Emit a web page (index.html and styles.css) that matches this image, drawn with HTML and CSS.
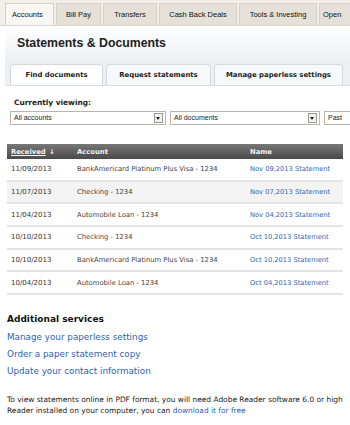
FILE: index.html
```html
<!DOCTYPE html>
<html>

<head>
    <title>Statements &amp; Documents</title>
    <link rel="stylesheet" href="styles.css">
</head>

<body>
    <div class="page">
        <div class="topnav">
            <div class="navtab active">Accounts</div>
            <div class="navtab tab-bill">Bill Pay</div>
            <div class="navtab tab-transfers">Transfers</div>
            <div class="navtab tab-deals">Cash Back Deals</div>
            <div class="navtab tab-tools">Tools &amp; Investing</div>
            <div class="navtab tab-open">Open</div>
        </div>

        <div class="heading">
            <h1>Statements &amp; Documents</h1>
        </div>

        <div class="subtabs">
            <div class="subtab active">Find documents</div>
            <div class="subtab">Request statements</div>
            <div class="subtab">Manage paperless settings</div>
        </div>

        <div class="filters">
            <div class="filter-label">Currently viewing:</div>
            <div class="selects">
                <div class="select sel-accounts">All accounts<span class="arrow"></span></div>
                <div class="select sel-docs">All documents<span class="arrow"></span></div>
                <div class="select sel-past">Past</div>
            </div>
        </div>

        <table class="docs">
            <thead>
                <tr>
                    <th class="col-date"><span class="sort">Received</span> <span class="sort-arrow">&#x2193;</span></th>
                    <th class="col-account">Account</th>
                    <th class="col-name">Name</th>
                </tr>
            </thead>
            <tbody>
                <tr>
                    <td>11/09/2013</td>
                    <td class="acct">BankAmericard Platinum Plus Visa - 1234</td>
                    <td><a href="#">Nov 09,2013 Statement</a></td>
                </tr>
                <tr class="alt">
                    <td>11/07/2013</td>
                    <td class="acct">Checking - 1234</td>
                    <td><a href="#">Nov 07,2013 Statement</a></td>
                </tr>
                <tr>
                    <td>11/04/2013</td>
                    <td class="acct">Automobile Loan - 1234</td>
                    <td><a href="#">Nov 04,2013 Statement</a></td>
                </tr>
                <tr>
                    <td>10/10/2013</td>
                    <td class="acct">Checking - 1234</td>
                    <td><a href="#">Oct 10,2013 Statement</a></td>
                </tr>
                <tr>
                    <td>10/10/2013</td>
                    <td class="acct">BankAmericard Platinum Plus Visa - 1234</td>
                    <td><a href="#">Oct 10,2013 Statement</a></td>
                </tr>
                <tr>
                    <td>10/04/2013</td>
                    <td class="acct">Automobile Loan - 1234</td>
                    <td><a href="#">Oct 04,2013 Statement</a></td>
                </tr>
            </tbody>
        </table>

        <div class="services">
            <h2>Additional services</h2>
            <a href="#">Manage your paperless settings</a>
            <a href="#">Order a paper statement copy</a>
            <a href="#">Update your contact information</a>
        </div>

        <p class="note">To view statements online in PDF format, you will need Adobe Reader software 6.0 or high<br>Reader installed on your computer, you can <a href="#">download it for free</a></p>
    </div>
</body>

</html>
```

FILE: styles.css
```css
body {
    margin: 0;
    padding: 0;
    background: #fff;
    font-family: "DejaVu Sans", Verdana, sans-serif;
    color: #222;
    overflow: hidden;
}

.page {
    width: 350px;
    height: 425px;
    overflow: hidden;
}

a {
    color: #2c5fb8;
    text-decoration: none;
}

/* top navigation */
.topnav {
    display: flex;
    gap: 2px;
    height: 22px;
    padding: 3px 0 0 5px;
    background: #f4eeeb;
    border-bottom: 1px solid #ddd8cf;
    white-space: nowrap;
}

.navtab {
    flex: none;
    display: flex;
    align-items: center;
    justify-content: center;
    background: #e5e1d9;
    border: 1px solid #d6d1c7;
    border-bottom: none;
    font-family: "Liberation Sans", Arial, sans-serif;
    font-size: 7.5px;
    color: #111;
}

.navtab.active {
    width: 49px;
    justify-content: flex-start;
    padding-left: 6px;
    box-sizing: border-box;
    background: #f8f7f4;
}

.tab-bill {
    width: 43px;
}

.tab-transfers {
    width: 52px;
}

.tab-deals {
    width: 76px;
}

.tab-tools {
    width: 76px;
}

.tab-open {
    width: 40px;
    justify-content: flex-start;
    padding-left: 3px;
}

.heading {
    margin-left: 5px;
    height: 34px;
    padding-left: 12px;
    display: flex;
    align-items: center;
    background: linear-gradient(#ffffff, #eef1f4);
}

h1 {
    margin: 0;
    font-family: "Liberation Sans", Arial, sans-serif;
    font-size: 12.3px;
    font-weight: bold;
    color: #222;
}

/* sub tabs */
.subtabs {
    display: flex;
    gap: 3px;
    height: 21px;
    margin-left: 5px;
    padding: 4px 0 0 5px;
    background: #edf0f3;
    border-bottom: 1px solid #d9dee4;
}

.subtab {
    display: flex;
    align-items: center;
    justify-content: center;
    background: #f7f8fa;
    border: 1px solid #d3d9e0;
    border-bottom: none;
    border-radius: 4px 4px 0 0;
    font-size: 6.9px;
    font-weight: bold;
    color: #222;
}

.subtab:nth-child(1) {
    width: 91px;
    background: #fff;
}

.subtab:nth-child(2) {
    width: 103px;
}

.subtab:nth-child(3) {
    width: 127px;
}

/* filters */
.filters {
    padding: 12px 0 0 10px;
}

.filter-label {
    padding-left: 4px;
    font-size: 7.4px;
    font-weight: bold;
    margin-bottom: 4px;
}

.selects {
    display: flex;
    gap: 4px;
    white-space: nowrap;
}

.select {
    position: relative;
    flex: none;
    height: 12px;
    line-height: 12px;
    padding-left: 3px;
    border: 1px solid #b9b4ad;
    background: #fff;
    font-family: "Liberation Sans", Arial, sans-serif;
    font-size: 7px;
    color: #222;
}

.sel-accounts {
    width: 151px;
}

.sel-docs {
    width: 145px;
}

.sel-past {
    width: 40px;
}

.arrow {
    position: absolute;
    right: 2px;
    top: 1px;
    width: 7px;
    height: 8px;
    border: 1px solid #9c9891;
    background: #f2f0ec;
}

.arrow::after {
    content: "";
    position: absolute;
    left: 1px;
    top: 3px;
    border-left: 2.5px solid transparent;
    border-right: 2.5px solid transparent;
    border-top: 3px solid #222;
}

/* statements table */
.docs {
    margin: 19px 0 0 7px;
    width: 336px;
    border-collapse: collapse;
    font-size: 7px;
}

.docs th {
    height: 15px;
    padding: 0 0 0 4px;
    text-align: left;
    color: #f2f2f2;
    font-size: 6.8px;
    font-weight: bold;
    background: linear-gradient(#777, #4a4a4a);
}

.docs th.col-date {
    width: 62px;
}

.docs th.col-account {
    width: 169px;
}

.sort {
    text-decoration: underline;
}

.sort-arrow {
    font-size: 7px;
    margin-left: 1px;
}

.docs td {
    height: 20.7px;
    padding: 0 0 0 4px;
    background: #fff;
    border-bottom: 2px solid #e4e4e4;
    color: #333;
    white-space: nowrap;
}

.docs tr.alt td {
    background: #f3f3f3;
}

.docs td.acct {
    font-size: 6.8px;
    color: #444;
}

.docs td a {
    font-size: 6.7px;
}

/* additional services */
.services {
    padding: 19px 0 0 7px;
    display: flex;
    flex-direction: column;
}

h2 {
    margin: 0 0 5px;
    font-size: 9px;
    font-weight: bold;
    color: #111;
}

.services a {
    font-size: 8.8px;
    line-height: 17px;
}

.note {
    margin: 14px 0 0 7px;
    white-space: nowrap;
    font-size: 7.45px;
    line-height: 11px;
    color: #222;
}
```
